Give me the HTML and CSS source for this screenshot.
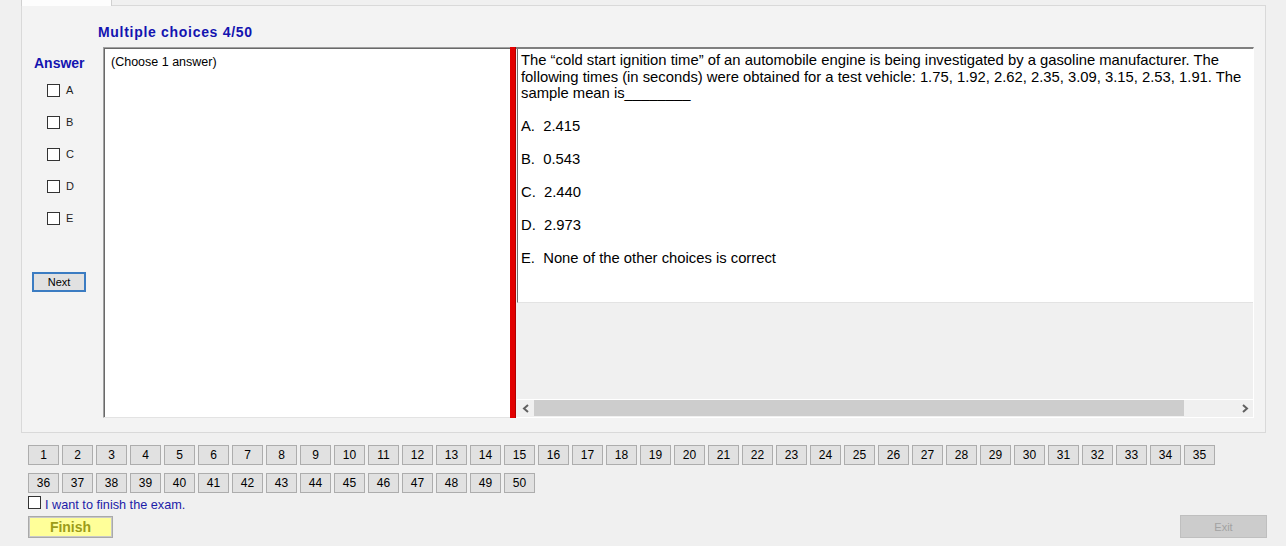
FILE: index.html
```html
<!DOCTYPE html>
<html>
<head>
<meta charset="utf-8">
<link rel="stylesheet" href="styles.css">
</head>
<body>
<div class="app">
  <div class="tabs"><div class="tab"></div></div>
  <div class="panel">
    <div class="title">Multiple choices 4/50</div>
    <div class="main">
      <div class="answers">
        <div class="answer-label">Answer</div>
        <div class="opt"><span class="cb"></span><span>A</span></div>
        <div class="opt"><span class="cb"></span><span>B</span></div>
        <div class="opt"><span class="cb"></span><span>C</span></div>
        <div class="opt"><span class="cb"></span><span>D</span></div>
        <div class="opt"><span class="cb"></span><span>E</span></div>
        <button class="next">Next</button>
      </div>
      <div class="qbox">(Choose 1 answer)</div>
      <div class="splitter"></div>
      <div class="rpane">
        <div class="qtext">
          <p class="stem">The “cold start ignition time” of an automobile engine is being investigated by a gasoline manufacturer. The following times (in seconds) were obtained for a test vehicle: 1.75, 1.92, 2.62, 2.35, 3.09, 3.15, 2.53, 1.91. The sample mean is________</p>
          <p class="choice">A.  2.415</p>
          <p class="choice">B.  0.543</p>
          <p class="choice">C.  2.440</p>
          <p class="choice">D.  2.973</p>
          <p class="choice">E.  None of the other choices is correct</p>
        </div>
        <div class="rfill"></div>
        <div class="hscroll">
          <span class="arrow"><svg width="8" height="9" viewBox="0 0 8 9"><polyline points="6,1 2,4.5 6,8" fill="none" stroke="#606060" stroke-width="2"/></svg></span>
          <div class="track"><div class="thumb"></div></div>
          <span class="arrow"><svg width="8" height="9" viewBox="0 0 8 9"><polyline points="2,1 6,4.5 2,8" fill="none" stroke="#606060" stroke-width="2"/></svg></span>
        </div>
      </div>
    </div>
  </div>
  <div class="bottom">
    <div class="nums">
      <button class="num">1</button><button class="num">2</button><button class="num">3</button><button class="num">4</button><button class="num">5</button>
      <button class="num">6</button><button class="num">7</button><button class="num">8</button><button class="num">9</button><button class="num">10</button>
      <button class="num">11</button><button class="num">12</button><button class="num">13</button><button class="num">14</button><button class="num">15</button>
      <button class="num">16</button><button class="num">17</button><button class="num">18</button><button class="num">19</button><button class="num">20</button>
      <button class="num">21</button><button class="num">22</button><button class="num">23</button><button class="num">24</button><button class="num">25</button>
      <button class="num">26</button><button class="num">27</button><button class="num">28</button><button class="num">29</button><button class="num">30</button>
      <button class="num">31</button><button class="num">32</button><button class="num">33</button><button class="num">34</button><button class="num">35</button>
      <button class="num">36</button><button class="num">37</button><button class="num">38</button><button class="num">39</button><button class="num">40</button>
      <button class="num">41</button><button class="num">42</button><button class="num">43</button><button class="num">44</button><button class="num">45</button>
      <button class="num">46</button><button class="num">47</button><button class="num">48</button><button class="num">49</button><button class="num">50</button>
    </div>
    <div class="finish-check"><span class="cb"></span><span class="finish-text">I want to finish the exam.</span></div>
    <div class="actions">
      <button class="finish">Finish</button>
      <button class="exit">Exit</button>
    </div>
  </div>
</div>
</body>
</html>
```
FILE: styles.css
```css
* { box-sizing: border-box; }
html, body { margin: 0; padding: 0; }
body {
  width: 1286px;
  height: 546px;
  overflow: hidden;
  background: #f0f0f0;
  font-family: "Liberation Sans", Arial, sans-serif;
  color: #000;
}
button { font-family: "Liberation Sans", Arial, sans-serif; padding: 0; margin: 0; cursor: default; }

.tabs { height: 5px; position: relative; }
.tab {
  position: absolute;
  left: 21px; top: -2px;
  width: 91px; height: 8px;
  background: #fdfdfd;
  border: 1px solid #d0d0d0;
  border-bottom: none;
  z-index: 2;
}

.panel {
  margin-left: 21px;
  width: 1245px;
  height: 428px;
  border: 1px solid #d9d9d9;
  background: #f3f3f3;
  padding: 18px 11px 14px 0;
  display: flex;
  flex-direction: column;
}
.title {
  padding-left: 76px;
  font-size: 14px;
  letter-spacing: 0.7px;
  line-height: 16px;
  font-weight: bold;
  color: #1414b0;
  margin-bottom: 7px;
}
.main { display: flex; height: 371px; }

.answers {
  width: 81px;
  display: flex;
  flex-direction: column;
  padding-top: 8px;
}
.answer-label {
  padding-left: 12px;
  font-size: 14px;
  line-height: 16px;
  font-weight: bold;
  color: #1414b0;
  margin-bottom: 3px;
}
.opt {
  height: 32px;
  display: flex;
  align-items: center;
  gap: 6px;
  padding-left: 25px;
  font-size: 11px;
  color: #222;
}
.cb {
  display: inline-block;
  width: 13px; height: 13px;
  border: 1px solid #333;
  background: #fff;
  flex: none;
}
.next {
  margin-top: 38px;
  margin-left: 10px;
  width: 54px; height: 20px;
  background: #e1e1e1;
  border: 2px solid #3b7cc2;
  font-size: 11px;
  color: #000;
}

.qbox {
  width: 407px;
  background: #fff;
  border-top: 1px solid #a0a0a0;
  border-left: 1px solid #a0a0a0;
  border-bottom: 1px solid #e3e3e3;
  box-shadow: inset 1px 1px 0 #696969;
  padding: 7px 6px 0 7px;
  font-size: 12.5px;
  line-height: 14px;
}
.splitter { width: 6px; background: #e20000; box-shadow: inset -1px 0 0 #b00000; }

.rpane {
  width: 738px;
  background: #f0f0f0;
  border-top: 2px solid #7f7f7f;
  border-right: 1px solid #fff;
  border-bottom: 1px solid #fff;
  padding-left: 1px;
  display: flex;
  flex-direction: column;
}
.qtext {
  height: 254px;
  background: #fff;
  border-left: 1px solid #6e6e6e;
  border-bottom: 1px solid #e3e3e3;
  padding: 3px 4px 0 3px;
  font-size: 14.8px;
  line-height: 16.5px;
}
.qtext p { margin: 0; }
.qtext .choice { margin-top: 16.5px; white-space: pre-wrap; }
.rfill { flex: 1; }
.hscroll {
  height: 18px;
  border-top: 1px solid #fff;
  display: flex;
  align-items: stretch;
  background: #f0f0f0;
}
.arrow {
  width: 17px;
  display: flex;
  align-items: center;
  justify-content: center;
  flex: none;
}
.track { flex: 1; display: flex; align-items: stretch; padding: 0 0 1px; }
.thumb { width: 650px; background: #cdcdcd; }

.bottom { padding: 12px 19px 0 28px; }
.nums {
  display: grid;
  grid-template-columns: repeat(35, 31px);
  column-gap: 3px;
  row-gap: 8px;
}
.num {
  height: 20px;
  background: #e1e1e1;
  border: 1px solid #adadad;
  font-size: 12px;
  color: #000;
}
.finish-check {
  margin-top: 2px;
  display: flex;
  align-items: flex-start;
  gap: 4px;
  height: 17px;
}
.finish-check .cb { margin-top: 1px; }
.finish-text { font-size: 12.7px; line-height: 16px; padding-top: 2px; color: #1c1ca8; }
.actions { display: flex; justify-content: space-between; align-items: flex-start; }
.finish {
  margin-top: 4px;
  width: 85px; height: 22px;
  background: #ffff99;
  border: 1px solid #a9a9a9;
  box-shadow: inset 0 0 0 1px #c9c9c9;
  font-size: 14px;
  font-weight: bold;
  color: #9c9c18;
}
.exit {
  margin-top: 3px;
  width: 87px; height: 23px;
  background: #cccccc;
  border: 1px solid #bfbfbf;
  font-size: 11px;
  color: #a2a2a2;
}
```
